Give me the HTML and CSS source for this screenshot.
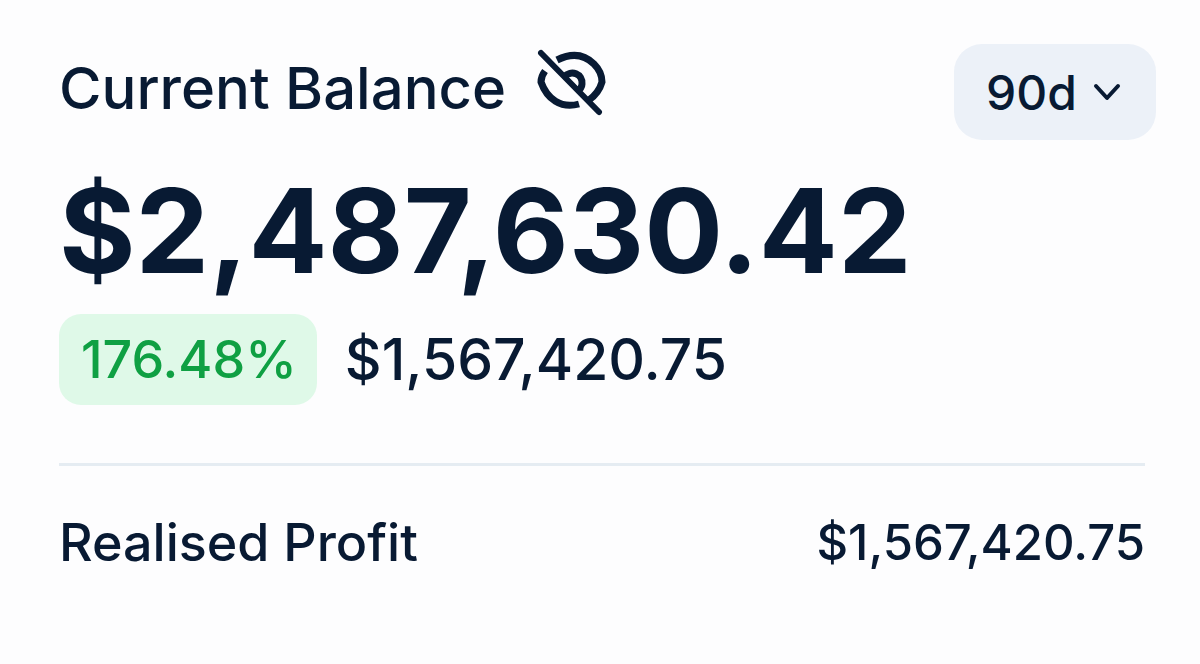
FILE: index.html
```html
<!DOCTYPE html>
<html lang="en">
<head>
  <meta charset="UTF-8">
  <meta name="viewport" content="width=device-width, initial-scale=1.0">
  <title>Current Balance</title>
  <link rel="stylesheet" href="styles.css">
</head>
<body>

<main class="balance-card">
  <header class="card-header">
    <h1>Current Balance</h1>
    <button class="hide-button" type="button" aria-label="Hide balance">
      <svg viewBox="0 0 76 68" fill="none" stroke="currentColor" stroke-width="7">
        <path d="M23 12 C37 5 50 6 60 16 C65 21 68 27 68 34 C66 41 62 47 55 52"/>
        <path d="M11 23 C8 27 7 30 7 34 C13 51 27 61 45 56"/>
        <path d="M30 29 C37 21 49 26 48 36 C48 39 46 42 43 43"/>
        <path d="M7 5 L65 64" stroke-linecap="round" stroke-width="6"/>
      </svg>
    </button>
    <div class="range">
      <select aria-label="Period">
        <option>90d</option>
      </select>
      <svg viewBox="0 0 30 20" fill="none" stroke="currentColor" stroke-width="4" stroke-linecap="round" stroke-linejoin="round">
        <path d="M4 4 L15 16 L26 4"/>
      </svg>
    </div>
  </header>

  <p class="balance">$2,487,630.42</p>

  <div class="change">
    <span class="percent">176.48%</span>
    <span>$1,567,420.75</span>
  </div>

  <div class="profit">
    <span>Realised Profit</span>
    <span class="profit-value">$1,567,420.75</span>
  </div>
</main>

</body>
</html>
```
FILE: styles.css
```css
body {
  font-family: Inter, sans-serif;
  background-color: #fdfdfe;
  color: #081a33;
  margin: 0;
}

.balance-card {
  padding: 44px 44px 44px 59px;
}

.card-header {
  display: flex;
  align-items: center;
}

h1 {
  font-size: 58px;
  font-weight: 500;
  line-height: 88px;
  margin: 0 0 8px;
}

.hide-button {
  display: flex;
  background: none;
  border: none;
  color: inherit;
  padding: 0;
  margin: 0 0 20px 28px;
  cursor: pointer;
}

.hide-button svg {
  width: 76px;
  height: 68px;
}

.range {
  display: grid;
  align-items: center;
  margin-left: auto;
}

.range select,
.range svg {
  grid-area: 1 / 1;
}

.range select {
  appearance: none;
  width: 202px;
  height: 96px;
  padding: 0 32px;
  border: none;
  border-radius: 28px;
  background-color: #ecf1f8;
  color: inherit;
  font: 500 48px Inter, sans-serif;
  cursor: pointer;
}

.range svg {
  width: 30px;
  height: 20px;
  justify-self: end;
  margin-right: 34px;
  pointer-events: none;
}

.balance {
  font-size: 117px;
  font-weight: 700;
  line-height: 150px;
  margin: 16px 0 8px;
}

.change {
  display: flex;
  align-items: center;
  gap: 28px;
  font-size: 57px;
  font-weight: 500;
}

.percent {
  background-color: #dff9e8;
  color: #0fa043;
  font-size: 52px;
  line-height: 91px;
  padding: 0 20px 0 22px;
  border-radius: 22px;
}

.profit {
  display: flex;
  justify-content: space-between;
  margin: 58px 11px 0 0;
  padding-top: 44px;
  border-top: 3px solid #e5ecf2;
  font-size: 52px;
  font-weight: 500;
  line-height: 66px;
}

.profit-value {
  font-size: 49px;
}
```
